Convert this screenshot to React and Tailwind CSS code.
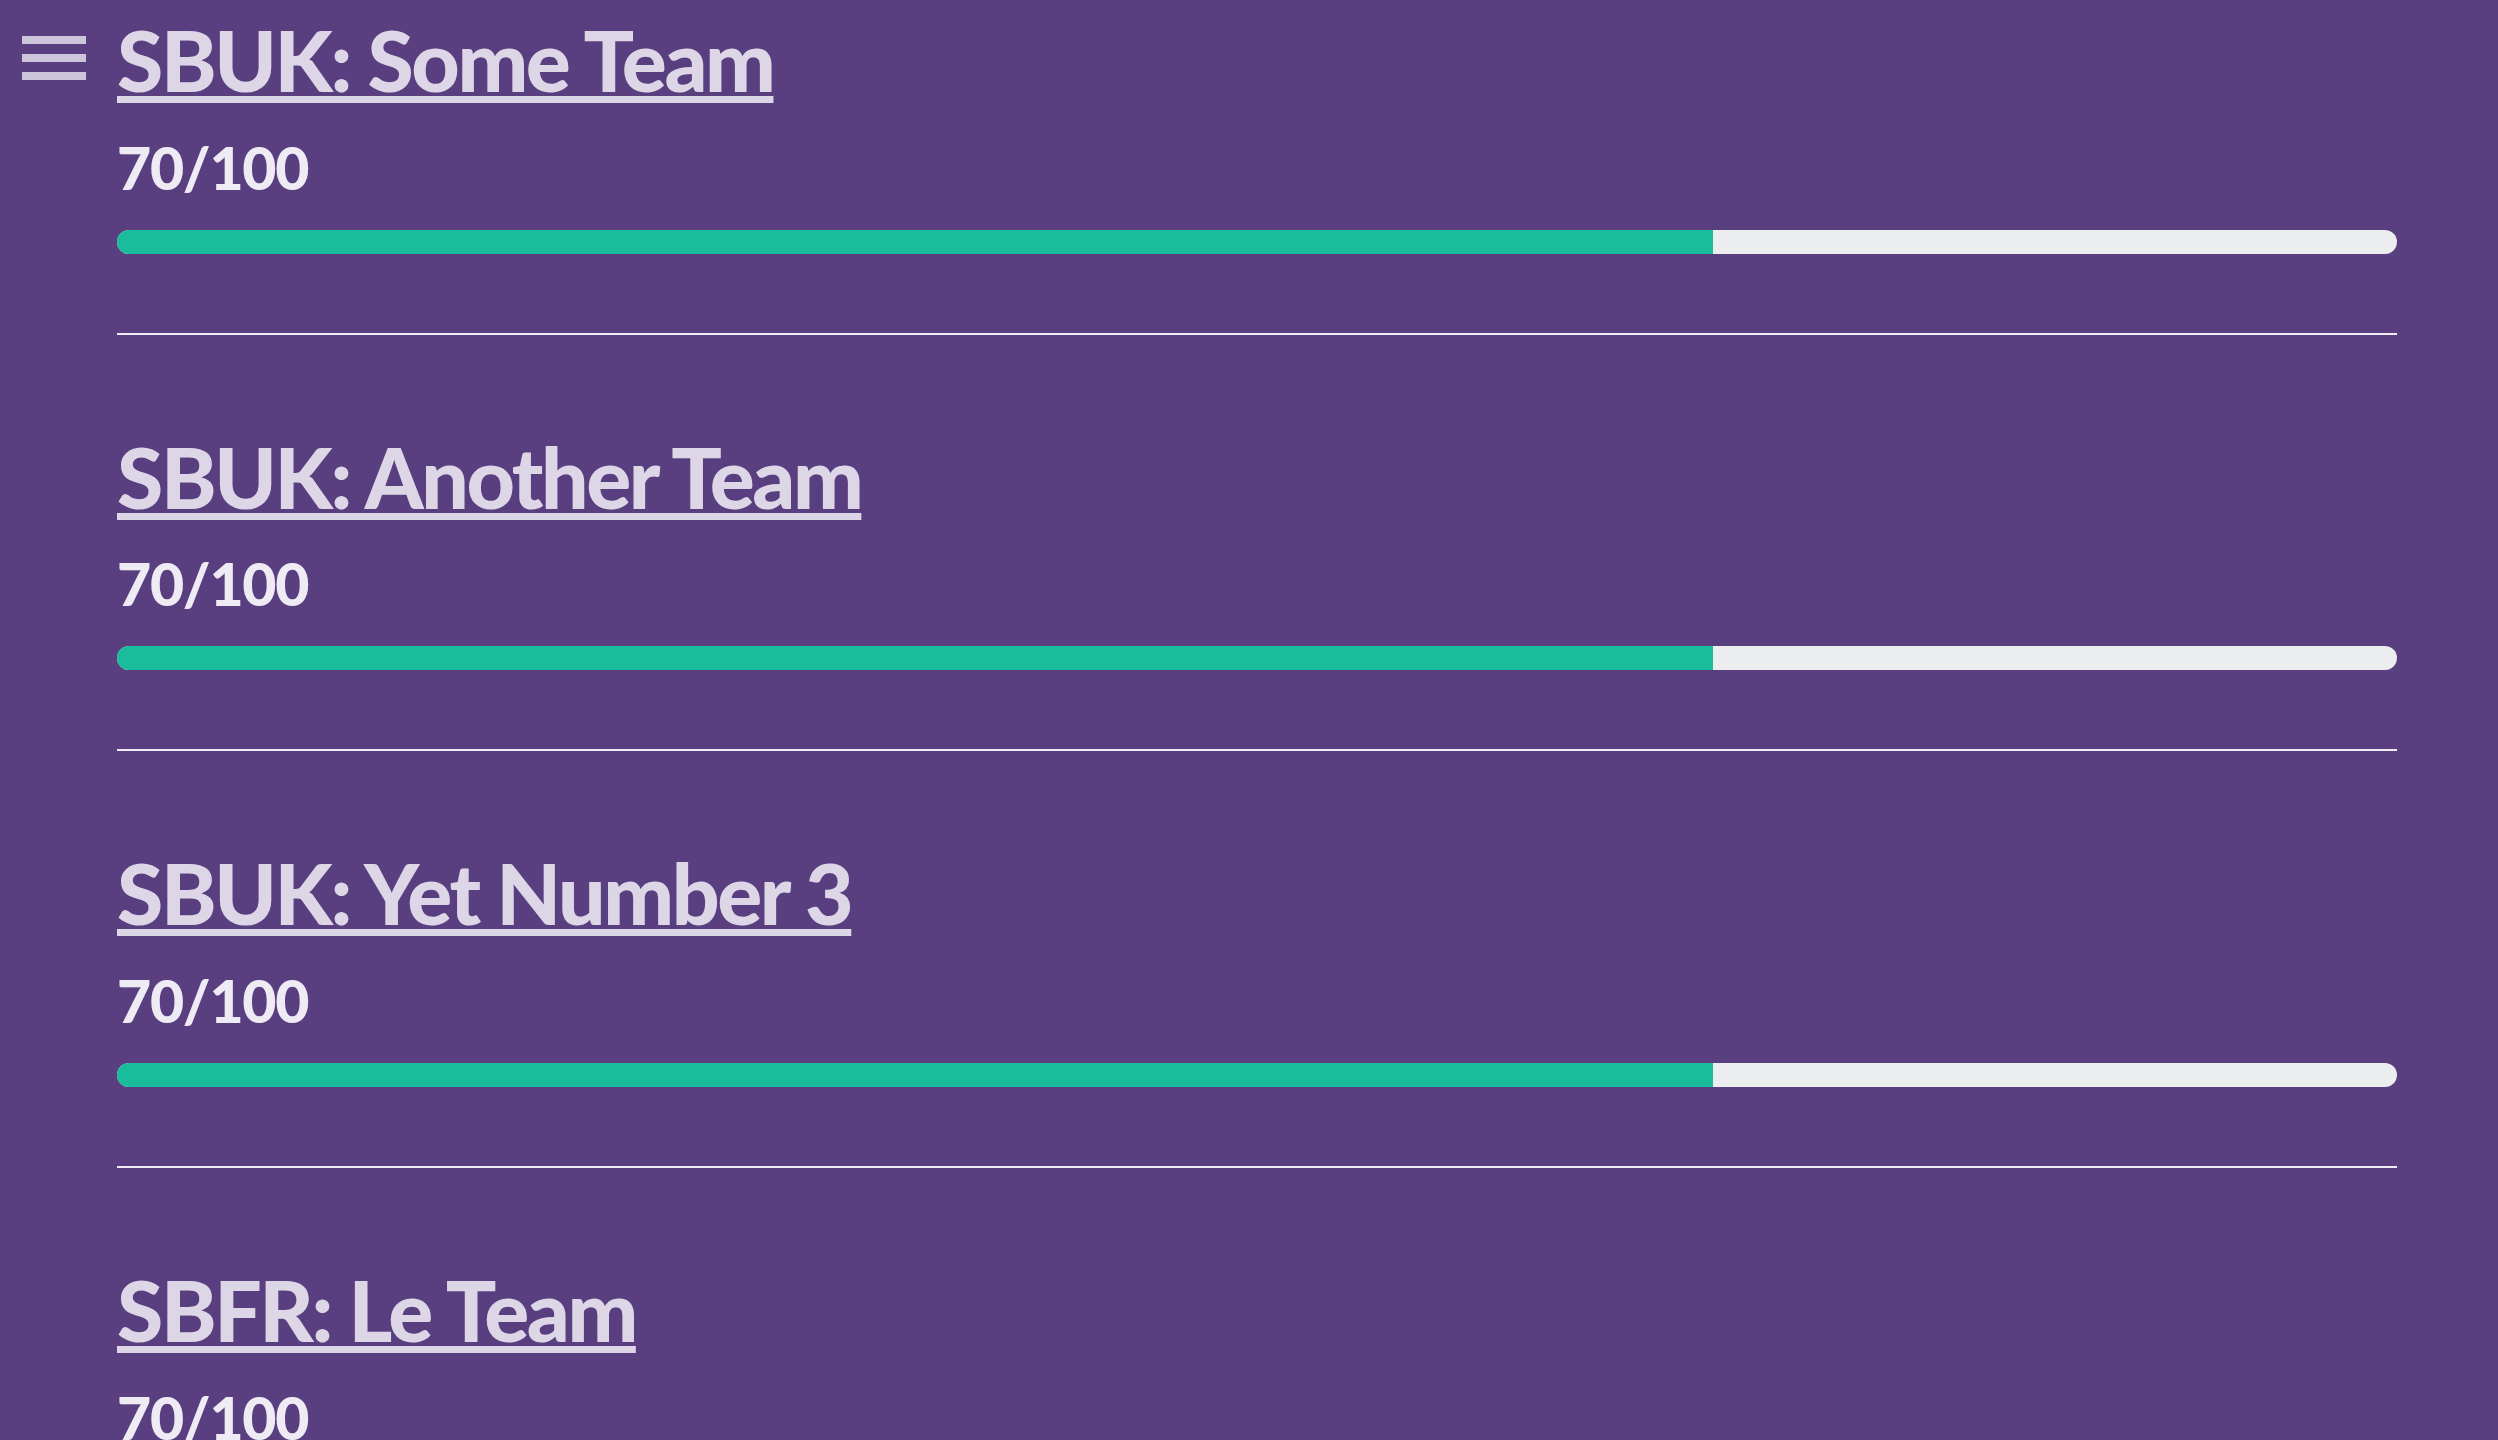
import { useState } from "react";

const teams = [
    { id: 1, name: "SBUK: Some Team", score: 70, max: 100 },
    { id: 2, name: "SBUK: Another Team", score: 70, max: 100 },
    { id: 3, name: "SBUK: Yet Number 3", score: 70, max: 100 },
    { id: 4, name: "SBFR: Le Team", score: 70, max: 100 },
];

function MenuIcon() {
    return (
        <svg width="64" height="44" viewBox="0 0 64 44" fill="#cdc5dc">
            <rect x="0" y="0" width="64" height="8" />
            <rect x="0" y="18" width="64" height="8" />
            <rect x="0" y="36" width="64" height="8" />
        </svg>
    );
}

export default function App() {
    const [menuOpen, setMenuOpen] = useState(false);

    return (
        <div className="relative min-h-screen bg-[#593f7f] font-['Lato','Noto_Sans',sans-serif]">
            <button
                className="absolute left-[22px] top-[36px] block leading-none"
                onClick={() => setMenuOpen(!menuOpen)}
            >
                <MenuIcon />
            </button>

            <main className="pl-[117px] pr-[101px] pt-[10px]">
                {teams.map((team) => (
                    <section key={team.id} className="mb-[92px]">
                        <h1 className="text-[84px] leading-[1.2] font-black tracking-[-2.4px] text-[#dcd6e6]">
                            <a href="#" className="underline decoration-[7px] underline-offset-[4px]">
                                {team.name}
                            </a>
                        </h1>
                        <p className="mt-[22px] text-[59px] leading-[1.2] font-black tracking-[-1.3px] text-[#eeebf4]">
                            {team.score}/{team.max}
                        </p>
                        <div className="mt-[26px] flex h-[24px] overflow-hidden rounded-full bg-[#ecedef]">
                            <div className="h-full bg-[#1abc9c]" style={{ width: `${(team.score / team.max) * 100}%` }} />
                        </div>
                        <hr className="mt-[79px] border-0 h-[2px] bg-[#f0edf5]" />
                    </section>
                ))}
            </main>
        </div>
    );
}
